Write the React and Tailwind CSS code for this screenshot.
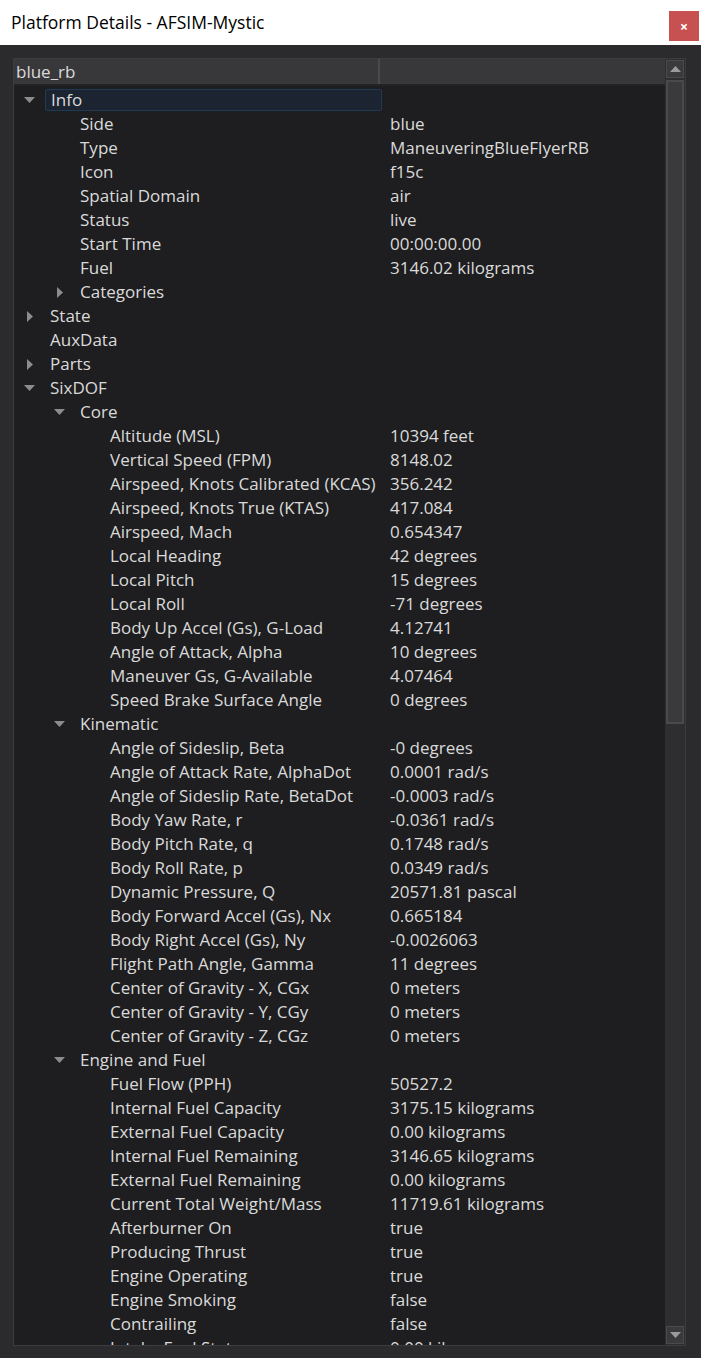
import React from "react";

const tree = [
  {
    label: "Info",
    open: true,
    selected: true,
    children: [
      { label: "Side", value: "blue" },
      { label: "Type", value: "ManeuveringBlueFlyerRB" },
      { label: "Icon", value: "f15c" },
      { label: "Spatial Domain", value: "air" },
      { label: "Status", value: "live" },
      { label: "Start Time", value: "00:00:00.00" },
      { label: "Fuel", value: "3146.02 kilograms" },
      { label: "Categories", open: false, children: [] },
    ],
  },
  { label: "State", open: false, children: [] },
  { label: "AuxData" },
  { label: "Parts", open: false, children: [] },
  {
    label: "SixDOF",
    open: true,
    children: [
      {
        label: "Core",
        open: true,
        children: [
          { label: "Altitude (MSL)", value: "10394 feet" },
          { label: "Vertical Speed (FPM)", value: "8148.02" },
          { label: "Airspeed, Knots Calibrated (KCAS)", value: "356.242" },
          { label: "Airspeed, Knots True (KTAS)", value: "417.084" },
          { label: "Airspeed, Mach", value: "0.654347" },
          { label: "Local Heading", value: "42 degrees" },
          { label: "Local Pitch", value: "15 degrees" },
          { label: "Local Roll", value: "-71 degrees" },
          { label: "Body Up Accel (Gs), G-Load", value: "4.12741" },
          { label: "Angle of Attack, Alpha", value: "10 degrees" },
          { label: "Maneuver Gs, G-Available", value: "4.07464" },
          { label: "Speed Brake Surface Angle", value: "0 degrees" },
        ],
      },
      {
        label: "Kinematic",
        open: true,
        children: [
          { label: "Angle of Sideslip, Beta", value: "-0 degrees" },
          { label: "Angle of Attack Rate, AlphaDot", value: "0.0001 rad/s" },
          { label: "Angle of Sideslip Rate, BetaDot", value: "-0.0003 rad/s" },
          { label: "Body Yaw Rate, r", value: "-0.0361 rad/s" },
          { label: "Body Pitch Rate, q", value: "0.1748 rad/s" },
          { label: "Body Roll Rate, p", value: "0.0349 rad/s" },
          { label: "Dynamic Pressure, Q", value: "20571.81 pascal" },
          { label: "Body Forward Accel (Gs), Nx", value: "0.665184" },
          { label: "Body Right Accel (Gs), Ny", value: "-0.0026063" },
          { label: "Flight Path Angle, Gamma", value: "11 degrees" },
          { label: "Center of Gravity - X, CGx", value: "0 meters" },
          { label: "Center of Gravity - Y, CGy", value: "0 meters" },
          { label: "Center of Gravity - Z, CGz", value: "0 meters" },
        ],
      },
      {
        label: "Engine and Fuel",
        open: true,
        children: [
          { label: "Fuel Flow (PPH)", value: "50527.2" },
          { label: "Internal Fuel Capacity", value: "3175.15 kilograms" },
          { label: "External Fuel Capacity", value: "0.00 kilograms" },
          { label: "Internal Fuel Remaining", value: "3146.65 kilograms" },
          { label: "External Fuel Remaining", value: "0.00 kilograms" },
          { label: "Current Total Weight/Mass", value: "11719.61 kilograms" },
          { label: "Afterburner On", value: "true" },
          { label: "Producing Thrust", value: "true" },
          { label: "Engine Operating", value: "true" },
          { label: "Engine Smoking", value: "false" },
          { label: "Contrailing", value: "false" },
          { label: "Intake Fuel State", value: "0.00 kilograms" },
        ],
      },
    ],
  },
];

const indentClass = ["w-[0px]", "w-[30px]", "w-[60px]"];

const flatten = (nodes, level = 0, out = []) => {
  nodes.forEach((n) => {
    out.push({ ...n, level });
    if (n.open && n.children) flatten(n.children, level + 1, out);
  });
  return out;
};

const Arrow = ({ open }) =>
  open ? (
    <svg width="11" height="6" viewBox="0 0 11 6">
      <polygon points="0,0 11,0 5.5,6" fill="#8c8c8c" />
    </svg>
  ) : (
    <svg width="6" height="11" viewBox="0 0 6 11">
      <polygon points="0,0 6,5.5 0,11" fill="#8c8c8c" />
    </svg>
  );

const Row = ({ item }) => {
  const hasArrow = item.children !== undefined;
  return (
    <div className="flex h-[24px] shrink-0 items-center">
      <div className="flex h-full w-[368px] shrink-0 items-center">
        <div className={`${indentClass[item.level]} shrink-0`}></div>
        <div className="flex w-[31px] shrink-0 items-center justify-center">
          {hasArrow && <Arrow open={item.open} />}
        </div>
        <div
          className={`flex h-[22px] flex-1 items-center pl-[5px] ${
            item.selected ? "rounded-[2px] border border-[#1d3b57] bg-[#1b2430] pl-[4px]" : ""
          }`}
        >
          <span className="whitespace-nowrap">{item.label}</span>
        </div>
      </div>
      <div className="whitespace-nowrap pl-[8px]">{item.value}</div>
    </div>
  );
};

const App = () => {
  const rows = flatten(tree);
  return (
    <div className="flex h-[1358px] w-[701px] flex-col overflow-hidden bg-white font-['Segoe_UI','Open_Sans',sans-serif]">
      {/* Title bar */}
      <div className="flex h-[45px] shrink-0 items-start justify-between bg-white">
        <div className="pl-[11px] pt-[10px] text-[17.5px] leading-[24px] text-black">
          Platform Details - AFSIM-Mystic
        </div>
        <div className="mr-[2px] mt-[11px] flex h-[30px] w-[30px] items-center justify-center bg-[#c75050] text-[14px] font-bold text-white">
          ×
        </div>
      </div>

      {/* Body */}
      <div className="flex min-h-0 flex-1 flex-col overflow-hidden bg-[#2b2b2d] pb-[12px] pl-[13px] pr-[15px] pt-[13px]">
        <div className="flex min-h-0 flex-1 overflow-hidden border border-[#3c3c3e] bg-[#1e1e20]">
          {/* Tree area */}
          <div className="flex min-h-0 flex-1 flex-col overflow-hidden text-[17px] text-[#dadada]">
            <div className="flex h-[27px] shrink-0 border-b-2 border-[#232325] bg-[#38383a]">
              <div className="flex w-[366px] items-center border-r-2 border-[#4a4a4c] pl-[2px] pt-[1px]">
                blue_rb
              </div>
              <div className="flex-1"></div>
            </div>
            <div className="flex min-h-0 flex-1 flex-col overflow-hidden pt-[2px]">
              {rows.map((r, i) => (
                <Row key={i} item={r} />
              ))}
            </div>
          </div>

          {/* Scrollbar */}
          <div className="flex w-[20px] shrink-0 flex-col bg-[#2e2e30] p-[1px]">
            <div className="flex h-[18px] shrink-0 items-center justify-center border border-[#4a4a4c] bg-[#3a3a3c]">
              <svg width="11" height="6" viewBox="0 0 11 6">
                <polygon points="0,6 11,6 5.5,0" fill="#9a9a9a" />
              </svg>
            </div>
            <div className="mt-[2px] h-[644px] shrink-0 border-2 border-[#4a4a4c] bg-[#3a3a3c]"></div>
            <div className="flex-1"></div>
            <div className="flex h-[18px] shrink-0 items-center justify-center border border-[#4a4a4c] bg-[#3a3a3c]">
              <svg width="11" height="6" viewBox="0 0 11 6">
                <polygon points="0,0 11,0 5.5,6" fill="#9a9a9a" />
              </svg>
            </div>
          </div>
        </div>
      </div>
    </div>
  );
};

export default App;
